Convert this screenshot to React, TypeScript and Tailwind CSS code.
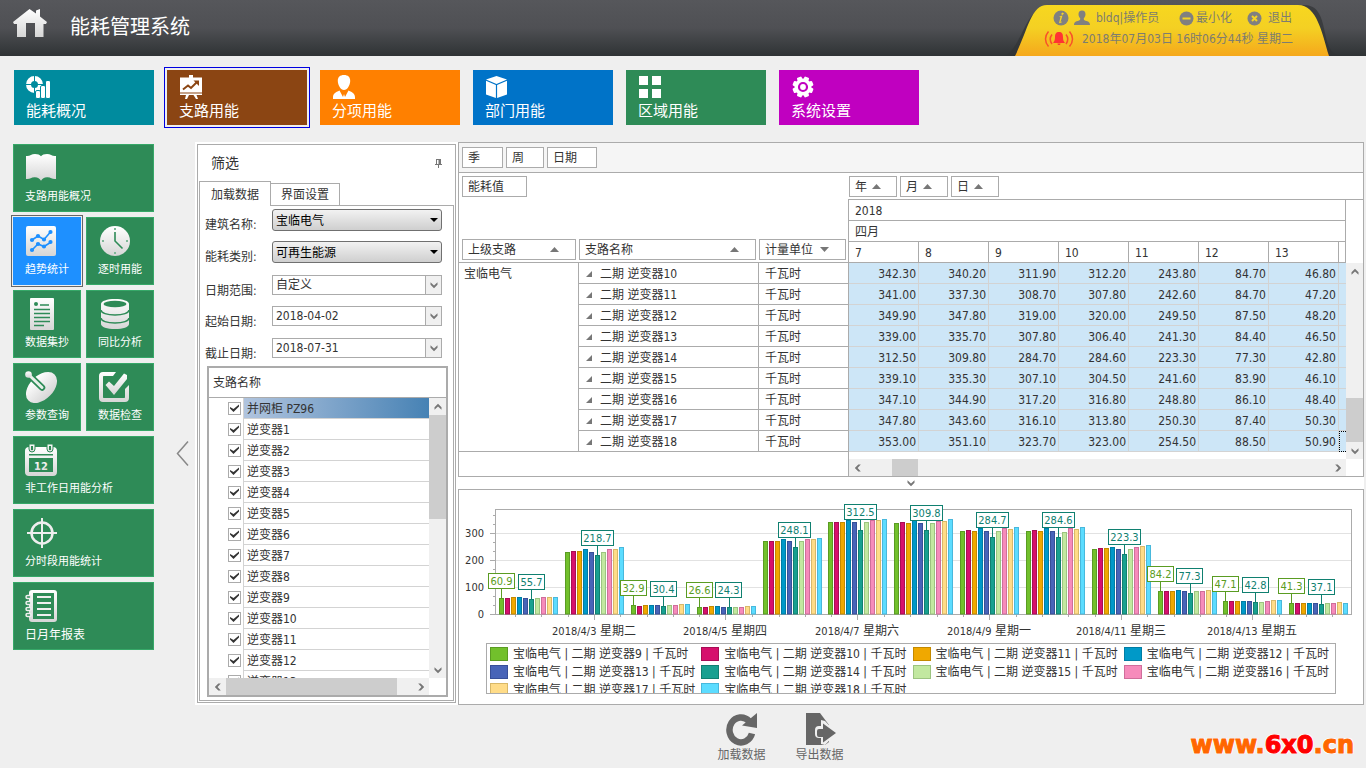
import type { ReactNode } from "react";

const SERIES = [
  { id: 9, fill: "#72c02c", line: "#5a9c22" },
  { id: 10, fill: "#d6106c", line: "#a80d55" },
  { id: 11, fill: "#f0a800", line: "#c48a00" },
  { id: 12, fill: "#0099c8", line: "#007da4" },
  { id: 13, fill: "#4864b8", line: "#384f98" },
  { id: 14, fill: "#18a090", line: "#108070" },
  { id: 15, fill: "#c2e8a0", line: "#9cc480" },
  { id: 16, fill: "#f68bbb", line: "#cf6e9b" },
  { id: 17, fill: "#ffdc88", line: "#d8b868" },
  { id: 18, fill: "#5cdcff", line: "#48b8dc" },
];

const READINGS: string[][] = [
  ["342.30", "340.20", "311.90", "312.20", "243.80", "84.70", "46.80"],
  ["341.00", "337.30", "308.70", "307.80", "242.60", "84.70", "47.20"],
  ["349.90", "347.80", "319.00", "320.00", "249.50", "87.50", "48.20"],
  ["339.00", "335.70", "307.80", "306.40", "241.30", "84.40", "46.50"],
  ["312.50", "309.80", "284.70", "284.60", "223.30", "77.30", "42.80"],
  ["339.10", "335.30", "307.10", "304.50", "241.60", "83.90", "46.10"],
  ["347.10", "344.90", "317.20", "316.80", "248.80", "86.10", "48.40"],
  ["347.80", "343.60", "316.10", "313.80", "250.30", "87.40", "50.30"],
  ["353.00", "351.10", "323.70", "323.00", "254.50", "88.50", "50.90"],
];

const FIRST_SERIES = [339.5, 336, 309, 307, 242, 84.2, 47.1];

const GROUPS: number[][] = [
  [60.9, 60, 63, 63, 60, 55.7, 60, 63, 63, 63],
  [231, 234, 234, 242, 231, 218.7, 231, 242, 242, 249],
  [32.9, 30, 34, 34, 34, 30.4, 34, 34, 37, 37],
  [26.6, 27, 30, 30, 27, 24.3, 27, 27, 30, 30],
  [271, 271, 271, 279, 271, 248.1, 271, 279, 279, 283],
  ...FIRST_SERIES.map((v, day) => [v, ...READINGS.map((r) => Number(r[day]))]),
  [41.3, 41, 41, 41, 41, 37.1, 41, 41, 44, 41],
];
const GROUP_X = [499, 565, 631, 697, 763, 828, 894, 960, 1026, 1092, 1158, 1223, 1289];

const CALLOUTS: { x: number; y: number; group: number; bar: number; text: string }[] = [
  { x: 488, y: 573, group: 0, bar: 0, text: "60.9" },
  { x: 518, y: 574, group: 0, bar: 5, text: "55.7" },
  { x: 581, y: 530, group: 1, bar: 5, text: "218.7" },
  { x: 620, y: 580, group: 2, bar: 0, text: "32.9" },
  { x: 650, y: 581, group: 2, bar: 5, text: "30.4" },
  { x: 686, y: 582, group: 3, bar: 0, text: "26.6" },
  { x: 715, y: 582, group: 3, bar: 5, text: "24.3" },
  { x: 778, y: 522, group: 4, bar: 5, text: "248.1" },
  { x: 844, y: 504, group: 5, bar: 5, text: "312.5" },
  { x: 910, y: 505, group: 6, bar: 5, text: "309.8" },
  { x: 976, y: 512, group: 7, bar: 5, text: "284.7" },
  { x: 1042, y: 512, group: 8, bar: 5, text: "284.6" },
  { x: 1108, y: 529, group: 9, bar: 5, text: "223.3" },
  { x: 1147, y: 566, group: 10, bar: 0, text: "84.2" },
  { x: 1176, y: 568, group: 10, bar: 5, text: "77.3" },
  { x: 1212, y: 576, group: 11, bar: 0, text: "47.1" },
  { x: 1242, y: 577, group: 11, bar: 5, text: "42.8" },
  { x: 1278, y: 578, group: 12, bar: 0, text: "41.3" },
  { x: 1308, y: 579, group: 12, bar: 5, text: "37.1" },
];

const X_LABELS = [
  { x: 594, date: "2018/4/3", day: "星期二" },
  { x: 725, date: "2018/4/5", day: "星期四" },
  { x: 857, date: "2018/4/7", day: "星期六" },
  { x: 989, date: "2018/4/9", day: "星期一" },
  { x: 1121, date: "2018/4/11", day: "星期三" },
  { x: 1252, date: "2018/4/13", day: "星期五" },
];

const barTop = (v: number) => Math.round(614 - v * 0.27);

function BarChart() {
  const minorX = Array.from({ length: 32 }, (_, i) => Math.round(515 + i * 26.35)).filter((_, i) => i % 5 !== 3);
  return (
    <svg className="block h-auto w-full" viewBox="459 490 904 150" role="img" aria-label="趋势统计">
      <g stroke="#e2e2e2">
        {[533.5, 560.5, 587.5].map((y) => (
          <line key={y} x1={496} x2={1351} y1={y} y2={y} />
        ))}
      </g>
      <rect x={495.5} y={509.5} width={856} height={105} fill="none" stroke="#ababab" />
      <g stroke="#ababab">
        {[533.5, 560.5, 587.5, 614.5].map((y) => (
          <line key={y} x1={490} x2={495} y1={y} y2={y} />
        ))}
        {[515.5, 524.5, 542.5, 551.5, 569.5, 578.5, 596.5, 605.5].map((y) => (
          <line key={y} x1={493} x2={495} y1={y} y2={y} />
        ))}
        {minorX.map((x) => (
          <line key={x} x1={x + 0.5} x2={x + 0.5} y1={615} y2={617} />
        ))}
        {X_LABELS.map((l) => (
          <line key={l.x} x1={l.x + 0.5} x2={l.x + 0.5} y1={615} y2={620} />
        ))}
      </g>
      {GROUPS.map((group, g) =>
        group.map((v, b) => (
          <rect
            key={`${g}-${b}`}
            x={GROUP_X[g] + b * 6 + 0.5}
            y={barTop(v) + 0.5}
            width={4}
            height={613.5 - barTop(v)}
            fill={SERIES[b].fill}
            stroke={SERIES[b].line}
          />
        )),
      )}
      {CALLOUTS.map((c) => {
        const color = SERIES[c.bar].line;
        const w = c.text.length > 4 ? 32 : 26;
        const anchor = GROUP_X[c.group] + c.bar * 6 + 2.5;
        return (
          <g key={c.text}>
            <line x1={anchor} x2={anchor} y1={c.y + 15} y2={barTop(GROUPS[c.group][c.bar])} stroke={color} />
            <rect x={c.x + 0.5} y={c.y + 0.5} width={w} height={15} fill="#fff" stroke={color} />
            <text x={c.x + w / 2 + 0.5} y={c.y + 12} textAnchor="middle" className="text-[11px]" fill={color}>
              {c.text}
            </text>
          </g>
        );
      })}
      <g fill="#333">
        {[300, 200, 100, 0].map((v) => (
          <text key={v} x={484} y={618 - v * 0.27} textAnchor="end" className="text-[11px]">
            {v}
          </text>
        ))}
        {X_LABELS.map((l) => (
          <text key={l.x} x={l.x} y={635} textAnchor="middle" className="text-[12px]">
            <tspan className="text-[11px]">{l.date}</tspan> {l.day}
          </text>
        ))}
      </g>
    </svg>
  );
}

type Direction = "up" | "down" | "left" | "right";
const TURN: Record<Direction, string> = { up: "", down: "rotate-180", left: "-rotate-90", right: "rotate-90" };

function Chevron({ dir }: { dir: Direction }) {
  return (
    <svg className={`block h-[8px] w-[8px] ${TURN[dir]}`} viewBox="0 0 8 8" aria-hidden="true">
      <path d="M0.5 6.8V4.3L4 0.8l3.5 3.5v2.5L4 3.6z" fill="#777" />
    </svg>
  );
}

function ScrollButton({ dir, label }: { dir: Direction; label: string }) {
  return (
    <button type="button" aria-label={label} className="flex h-[17px] w-[17px] shrink-0 items-center justify-center bg-[#f0f0f0]">
      <Chevron dir={dir} />
    </button>
  );
}

function FieldChip({ label, width, sort }: { label: string; width: string; sort?: "asc" | "desc" | "near" }) {
  return (
    <button
      type="button"
      className={`flex h-[21px] items-center border border-[#ababab] bg-white pl-[5px] ${sort === "near" || !sort ? "justify-start gap-[5px]" : "justify-between pr-[16px]"} ${width}`}
    >
      <span>{label}</span>
      {sort && (
        <svg className={sort === "desc" ? "h-[5px] w-[9px] rotate-180" : "h-[5px] w-[9px]"} viewBox="0 0 9 5" aria-hidden="true">
          <path d="M4.5 0L9 5H0z" fill="#777" />
        </svg>
      )}
    </button>
  );
}

const NAV: { label: string; color: string; active?: boolean; icon: ReactNode }[] = [
  {
    label: "能耗概况",
    color: "bg-[#008b9e]",
    icon: (
      <>
        <circle cx="8.5" cy="9.5" r="6" fill="none" stroke="#fff" strokeWidth="5" />
        <path d="M8.5 0.5v6M0 9.500h6M11 9.500h6M8.500 12.500v6" stroke="#008b9e" strokeWidth="1" />
        <g stroke="#008b9e" strokeWidth="1">
          <rect x="9.500" y="15.500" width="5" height="8" rx="1.500" />
          <rect x="14.500" y="10.500" width="5" height="13" rx="1.500" />
          <rect x="19.500" y="5.500" width="5" height="18" rx="1.500" />
        </g>
      </>
    ),
  },
  {
    label: "支路用能",
    color: "bg-[#8b4513]",
    active: true,
    icon: (
      <>
        <path d="M10 0h4v2.500h9V17.500H1v-15h9zM1 18.500h22V20H1zM7 20h3l-2 4H6zM14.500 20h3l1.500 4h-2z" />
        <path d="M4 14.500l5-4 3 2.500 6-6" fill="none" stroke="#8b4513" strokeWidth="2" />
        <path d="M14.500 5.500H20V11z" fill="#8b4513" />
      </>
    ),
  },
  {
    label: "分项用能",
    color: "bg-[#ff8000]",
    icon: (
      <path d="M5.800 6C5.800 2 8 0 12 0s6.200 2 6.200 6c0 2-.8 4.500-2 6.300C15 14 13.800 15 12 15s-3-1-4.200-2.700C6.600 10.500 5.800 8 5.800 6zM7.500 15.500L11 22l1-3 1 3 3.500-6.500c4 1.800 6.500 3 6.500 7V24H1v-1.500c0-4 2.500-5.200 6.500-7z" />
    ),
  },
  {
    label: "部门用能",
    color: "bg-[#0073c8]",
    icon: <path d="M11.500 1L22 4.500 11.500 9 1 4.500zM1 5.700l9.900 4.300v13L1 19.500zM22 5.700v13.800L12.100 23V10z" />,
  },
  {
    label: "区域用能",
    color: "bg-[#2e8b57]",
    icon: <path d="M1 1h9v9H1zM14 1h9v9h-9zM1 14h9v9H1zM14 14h9v9h-9z" />,
  },
  {
    label: "系统设置",
    color: "bg-[#c000c0]",
    icon: (
      <>
        <circle cx="12" cy="12" r="8.500" />
        {[22.5, 67.5, 112.5, 157.5, 202.5, 247.5, 292.5, 337.5].map((a) => (
          <rect key={a} x="9.500" y="1.500" width="5" height="4" rx="1" transform={`rotate(${a} 12 12)`} />
        ))}
        <circle cx="12" cy="12" r="4" fill="#fff" stroke="#c000c0" strokeWidth="2.200" />
      </>
    ),
  },
];

const GREEN = "#2e8b57";
const SIDE: { label: string; wide?: boolean; active?: boolean; big?: boolean; icon: ReactNode }[] = [
  {
    label: "支路用能概况",
    wide: true,
    icon: (
      <path d="M1 4c4 .6 5-2 9-2 3 0 4.500.8 6 2.300C17.500 2.800 19 2 22 2c4 0 5 2.600 9 2v23c-4 .6-5-2-9-1.700-3 0-4.500 1.200-6 3.500-1.500-2.300-3-3.500-6-3.500-4-.3-5 2.300-9 1.700z" />
    ),
  },
  {
    label: "趋势统计",
    active: true,
    icon: (
      <>
        <rect x="1" y="1" width="30" height="30" rx="2" />
        <g stroke="#1e90ff" strokeWidth="1.600" fill="#1e90ff">
          <path d="M7 15l6-4 6 3.500 6.500-7.500M7 25l6-6 6 2.500 6.500-4" fill="none" />
          {[[7, 15], [13, 11], [19, 14.5], [25.5, 7], [7, 25], [13, 19], [19, 21.5], [25.5, 17]].map(([x, y]) => (
            <circle key={`${x}-${y}`} cx={x} cy={y} r="1.300" />
          ))}
        </g>
      </>
    ),
  },
  {
    label: "逐时用能",
    icon: (
      <>
        <circle cx="17" cy="16" r="15" />
        <path d="M17 7v9l7.500 7.500" stroke={GREEN} strokeWidth="1.600" fill="none" />
        <path d="M16 3h2v2h-2zM16 27h2v2h-2zM4 15h2v2H4zM28 15h2v2h-2z" fill="#7fb898" />
      </>
    ),
  },
  {
    label: "数据集抄",
    icon: (
      <>
        <rect x="5" y="0" width="24" height="32" rx="1" />
        <circle cx="11" cy="6" r="2" fill={GREEN} />
        <path d="M15 7h9M9 11.500h16M9 15.500h16M9 19.500h16M9 23.500h16M9 27.500h10" stroke={GREEN} strokeWidth="1.500" />
      </>
    ),
  },
  {
    label: "同比分析",
    icon: (
      <>
        <path d="M3 6c0-3 6-5 14-5s14 2 14 5v20c0 3-6 5-14 5S3 29 3 26z" />
        <ellipse cx="17" cy="6" rx="11.500" ry="3.200" fill={GREEN} />
        <path d="M3 12c0 3 6 5 14 5s14-2 14-5M3 20c0 3 6 5 14 5s14-2 14-5" fill="none" stroke={GREEN} strokeWidth="1.500" />
      </>
    ),
  },
  {
    label: "参数查询",
    icon: (
      <>
        <ellipse cx="16.500" cy="16.500" rx="18.500" ry="11.800" transform="rotate(-45 16.500 16.500)" />
        <path d="M3 3l14 13.500" stroke={GREEN} strokeWidth="6.500" strokeLinecap="round" />
        <path d="M3 3l14 13.500" stroke="#e8f0ea" strokeWidth="3" strokeLinecap="round" />
        <circle cx="3.500" cy="3.500" r="3.300" />
      </>
    ),
  },
  {
    label: "数据检查",
    icon: (
      <>
        <path d="M18 1H5C2.500 1 1 2.500 1 5v22c0 2.500 1.500 4 4 4h22c2.500 0 4-1.500 4-4V14l-4 4v8c0 .7-.3 1-1 1H6c-.7 0-1-.3-1-1V6c0-.7.3-1 1-1h9z" />
        <path d="M7.500 14l3.500-3.500 5 4.500L26 2.500l3 1.500v4L16 24z" />
      </>
    ),
  },
  {
    label: "非工作日用能分析",
    wide: true,
    icon: (
      <>
        <path d="M4 3h24c2.500 0 4 1.500 4 4v21c0 2.500-1.500 4-4 4H4c-2.500 0-4-1.500-4-4V7c0-2.500 1.500-4 4-4z" />
        <path d="M4 0h6v5a3 3 0 0 1-6 0zM22 0h6v5a3 3 0 0 1-6 0z" stroke={GREEN} />
        <path d="M6 2h2v4H6zM24 2h2v4h-2zM4 10h24v1.500H4zM4 14h24v14H4z" fill={GREEN} />
        <text x="16" y="26" textAnchor="middle" fontSize="11" fontWeight="bold">12</text>
      </>
    ),
  },
  {
    label: "分时段用能统计",
    wide: true,
    icon: (
      <>
        <circle cx="17" cy="16" r="10.500" fill="none" stroke="#eee" strokeWidth="2.500" />
        <path d="M17 1v30M2 16h30" stroke="#eee" strokeWidth="2" />
      </>
    ),
  },
  {
    label: "日月年报表",
    wide: true,
    big: true,
    icon: (
      <>
        <path d="M7 0h22c2 0 3 1 3 3v26c0 2-1 3-3 3H7c-2 0-3-1-3-3V3c0-2 1-3 3-3z" />
        <path d="M8 3h21v26H8z" fill={GREEN} />
        <path d="M12 7h14M12 13h14M12 19h14M12 25h14" stroke="#f0f0f0" strokeWidth="2" />
        {[5.5, 11.5, 17.5, 23.5].map((y) => (
          <rect key={y} x="1" y={y} width="5" height="3" rx="1.500" fill={GREEN} stroke="#f0f0f0" strokeWidth="1.500" />
        ))}
      </>
    ),
  },
];

const BRANCHES = ["并网柜 PZ96", ...Array.from({ length: 13 }, (_, i) => `逆变器${i + 1}`)];

function Header() {
  return (
    <header className="flex h-[56px] justify-between bg-linear-to-b from-[#56575b] via-[#4f5054] to-[#2f3335]">
      <div className="flex pl-[12px]">
        <a href="#home" aria-label="首页" className="mt-[8px] block h-[30px] w-[36px]">
          <svg viewBox="0 0 36 30" className="h-full w-full" aria-hidden="true">
            <defs>
              <linearGradient id="metal" x1="0" y1="0" x2="0" y2="1">
                <stop offset="0" stopColor="#fff" />
                <stop offset="1" stopColor="#d6d6d6" />
              </linearGradient>
            </defs>
            <path d="M17.500 1L24 5.500V2.500l4-1.500v7.500l7 5.500-1 2h-2.500v13H23V15h-9v14H5V16H2l-1-2z" fill="url(#metal)" />
          </svg>
        </a>
        <h1 className="ml-[22px] mt-[12px] text-[20px] leading-[30px] text-white">能耗管理系统</h1>
      </div>
      <div className="relative mr-[26px] w-[336px] text-[12px] leading-[18px] text-[#7d7d70]">
        <svg className="absolute inset-0 h-[56px] w-[336px]" viewBox="0 0 336 56" aria-hidden="true">
          <defs>
            <linearGradient id="gold" x1="0" y1="0" x2="0" y2="1">
              <stop offset="0" stopColor="#f7d71f" />
              <stop offset="0.45" stopColor="#f4d023" />
              <stop offset="1" stopColor="#f5a81c" />
            </linearGradient>
          </defs>
          <path d="M2 56C22 40 20 5 50 5h250C328 5 314 52 336 56z" fill="#303335" opacity="0.700" />
          <path d="M11 56C24 30 27 5 43 5h251c19 0 24 28 31 51z" fill="url(#gold)" />
        </svg>
        <div className="relative ml-[49px] mt-[9px] flex items-center">
          <svg className="h-[16px] w-[16px]" viewBox="0 0 16 16" aria-hidden="true">
            <circle cx="8" cy="8" r="7.500" fill="#808080" />
            <path d="M9.500 2.500l1.500 1-1.500 1.500L8 4zM6 6.500l3.500-1L7.500 12l1.500-.5-.5 1-2.500.8L7.500 7z" fill="#f4d424" />
          </svg>
          <svg className="ml-[5px] h-[16px] w-[16px]" viewBox="0 0 16 16" aria-hidden="true">
            <path d="M8 0.500c2.500 0 3.500 1.500 3.500 3.800 0 1.700-.8 3.200-1.700 4 0 1.500.2 2 1.700 2.500 2.500.7 4.500 1.200 4.500 4.200H0c0-3 2-3.500 4.500-4.200C6 10.300 6.200 9.800 6.200 8.300c-.9-.8-1.700-2.300-1.700-4C4.500 2 5.500 0.500 8 0.500z" fill="#808080" />
          </svg>
          <span className="ml-[6px] w-[83px]">bldq|操作员</span>
          <button type="button" className="flex w-[68px] items-center gap-[2px]">
            <svg className="h-[15px] w-[15px]" viewBox="0 0 15 15" aria-hidden="true">
              <circle cx="7.500" cy="7.500" r="7" fill="#808080" />
              <path d="M3.500 6.500h8v2h-8z" fill="#f4d424" />
            </svg>
            最小化
          </button>
          <button type="button" className="flex items-center gap-[6px]">
            <svg className="h-[15px] w-[15px]" viewBox="0 0 15 15" aria-hidden="true">
              <circle cx="7.500" cy="7.500" r="7" fill="#808080" />
              <path d="M5 5l5 5M10 5l-5 5" stroke="#f4d424" strokeWidth="2" />
            </svg>
            退出
          </button>
        </div>
        <div className="relative ml-[40px] mt-[3px] flex items-center gap-[8px]">
          <svg className="h-[18px] w-[30px]" viewBox="0 0 30 18" aria-hidden="true">
            <path d="M15 2c3 0 4 2 4 5 0 3 .5 4 2 6H9c1.500-2 2-3 2-6 0-3 1-5 4-5zM13.500 13.500h3c0 2-3 2-3 0z" fill="#f33" />
            <path d="M8 4.500c-2.300 3-2.300 6.500 0 9.500M4.500 1.500c-4 4.500-4 10.500 0 15M22 4.500c2.300 3 2.300 6.500 0 9.500M25.500 1.500c4 4.500 4 10.500 0 15" fill="none" stroke="#f8502a" strokeWidth="1.500" />
          </svg>
          <time>2018年07月03日 16时06分44秒 星期二</time>
        </div>
      </div>
    </header>
  );
}

function FilterPanel() {
  const labelClass = "w-[67px] shrink-0 pl-[5px] pt-[7px]";
  const classic =
    "h-[22px] w-full appearance-none rounded-[3px] border border-[#707070] bg-linear-to-b from-[#f2f2f2] to-[#cfcfcf] pl-[3px] pt-[1px] text-black";
  const flat = "h-[20px] w-full appearance-none border border-[#ababab] bg-white pl-[3px] text-[#333]";
  const arrowBox = "pointer-events-none absolute right-0 top-0 flex h-[20px] w-[17px] items-center justify-center border border-[#ababab] bg-[#f0f0f0]";
  return (
    <section className="flex w-[259px] shrink-0 flex-col border border-[#ababab] p-px">
      <div className="flex h-[34px] items-center justify-between pl-[12px] pr-[12px]">
        <h2 className="text-[14px]">筛选</h2>
        <button type="button" aria-label="固定">
          <svg className="h-[9px] w-[7px]" viewBox="0 0 7 9" aria-hidden="true">
            <path d="M1 0h5v5h1v1H4v3H3V6H0V5h1zM2 1v4h1.500V1z" fill="#777" fillRule="evenodd" />
          </svg>
        </button>
      </div>
      <div role="tablist" className="mt-px flex items-end">
        <button type="button" role="tab" aria-selected="true" className="h-[25px] w-[72px] border border-b-0 border-[#ababab] pt-[1px] text-center">
          加载数据
        </button>
        <button type="button" role="tab" aria-selected="false" className="h-[23px] w-[69px] border border-l-0 border-[#ababab] pt-[1px] text-center">
          界面设置
        </button>
        <div className="h-px flex-1 bg-[#ababab]" />
      </div>
      <div className="flex flex-1 flex-col border border-t-0 border-[#ababab]">
        <div className="flex flex-col pr-[11px] pt-[3px]">
          <div className="flex h-[32px]">
            <label htmlFor="building" className={labelClass}>建筑名称:</label>
            <div className="relative ml-[5px] flex-1">
              <select id="building" className={classic}>
                <option>宝临电气</option>
              </select>
              <svg className="pointer-events-none absolute right-[4px] top-[9px] h-[4px] w-[8px]" viewBox="0 0 8 4" aria-hidden="true">
                <path d="M0 0h8L4 4z" />
              </svg>
            </div>
          </div>
          <div className="flex h-[34px]">
            <label htmlFor="category" className={labelClass}>能耗类别:</label>
            <div className="relative ml-[5px] flex-1">
              <select id="category" className={classic}>
                <option>可再生能源</option>
              </select>
              <svg className="pointer-events-none absolute right-[4px] top-[9px] h-[4px] w-[8px]" viewBox="0 0 8 4" aria-hidden="true">
                <path d="M0 0h8L4 4z" />
              </svg>
            </div>
          </div>
          <div className="flex h-[31px]">
            <label htmlFor="range" className={labelClass}>日期范围:</label>
            <div className="relative ml-[5px] flex-1">
              <select id="range" className={flat}>
                <option>自定义</option>
              </select>
              <span className={arrowBox}><Chevron dir="down" /></span>
            </div>
          </div>
          <div className="flex h-[32px]">
            <label htmlFor="from" className={labelClass}>起始日期:</label>
            <div className="relative ml-[5px] flex-1">
              <input id="from" defaultValue="2018-04-02" className={flat} />
              <span className={arrowBox}><Chevron dir="down" /></span>
            </div>
          </div>
          <div className="flex h-[28px]">
            <label htmlFor="to" className={labelClass}>截止日期:</label>
            <div className="relative ml-[5px] flex-1">
              <input id="to" defaultValue="2018-07-31" className={flat} />
              <span className={arrowBox}><Chevron dir="down" /></span>
            </div>
          </div>
        </div>
        <div className="mb-[3px] ml-[7px] mr-[5px] flex-1 border-2 border-[#ababab]">
          <div className="flex h-[30px] items-center border-b border-[#ababab] pl-[4px]">支路名称</div>
          <div className="flex h-[280px]">
            <ul className="flex-1 overflow-hidden">
              {BRANCHES.map((name, i) => (
                <li key={name} className="h-[21px]">
                  <label className="flex h-full items-center">
                    <input type="checkbox" defaultChecked className="peer sr-only" />
                    <span className="ml-[19px] mr-[2px] flex h-[13px] w-[13px] items-center justify-center border border-[#ababab] bg-white peer-focus-visible:outline">
                      <svg className="h-[9px] w-[9px]" viewBox="0 0 9 9" aria-hidden="true">
                        <path d="M0 4.500l3.500 3.500L9 2.500V0.500L3.500 5 0 3z" fill="#333" />
                      </svg>
                    </span>
                    <span
                      className={`flex h-full flex-1 items-center border-b border-l border-[#d3d3d3] pl-[3px] pt-[2px] ${i === 0 ? "bg-linear-to-r from-[#b0c4de] to-[#4682b4]" : ""}`}
                    >
                      {name}
                    </span>
                  </label>
                </li>
              ))}
            </ul>
            <div className="flex w-[17px] flex-col justify-between bg-[#f0f0f0]">
              <div>
                <ScrollButton dir="up" label="向上" />
                <div className="h-[104px] bg-[#cdcdcd]" />
              </div>
              <ScrollButton dir="down" label="向下" />
            </div>
          </div>
          <div className="mr-[17px] flex bg-[#f0f0f0]">
            <ScrollButton dir="left" label="向左" />
            <div className="w-[171px] bg-[#cdcdcd]" />
            <div className="flex-1" />
            <ScrollButton dir="right" label="向右" />
          </div>
        </div>
      </div>
    </section>
  );
}

function PivotGrid() {
  const head = "h-[21px] border-b border-r border-[#ababab] p-0 pl-[6px] pt-[2px] text-left font-normal";
  const rowHead = "h-[21px] border-b border-r border-[#ababab] p-0 pt-[2px] text-left font-normal";
  return (
    <section className="border border-[#ababab] bg-white">
      <div className="flex h-[30px] items-center gap-[3px] border-b border-[#ababab] bg-[#f5f5f5] pl-[3px]">
        <FieldChip label="季" width="w-[41px]" />
        <FieldChip label="周" width="w-[38px]" />
        <FieldChip label="日期" width="w-[50px]" />
      </div>
      <div className="flex">
        <div className="w-[389px] shrink-0">
          <div className="flex h-[89px] flex-col justify-between pb-[2px] pl-[3px] pt-[3px]">
            <FieldChip label="能耗值" width="w-[65px]" />
            <div className="flex gap-[3px]">
              <FieldChip label="上级支路" width="w-[114px]" sort="asc" />
              <FieldChip label="支路名称" width="w-[177px]" sort="asc" />
              <FieldChip label="计量单位" width="w-[87px]" sort="desc" />
            </div>
          </div>
          <table className="w-full table-fixed border-separate border-spacing-0 border-t border-[#ababab]">
            <colgroup>
              <col className="w-[120px]" />
              <col className="w-[180px]" />
              <col />
            </colgroup>
            <tbody>
              {READINGS.map((_, i) => (
                <tr key={i}>
                  {i === 0 && (
                    <th rowSpan={9} scope="rowgroup" className="border-b border-r border-[#ababab] p-0 pl-[5px] pt-[2px] text-left align-top font-normal">
                      宝临电气
                    </th>
                  )}
                  <th scope="row" className={rowHead}>
                    <span className="flex items-center gap-[8px] pl-[7px]">
                      <svg className="h-[6px] w-[6px]" viewBox="0 0 6 6" aria-hidden="true">
                        <path d="M6 0v6H0z" fill="#777" />
                      </svg>
                      二期 逆变器{i + 10}
                    </span>
                  </th>
                  <td className="h-[21px] border-b border-[#ababab] p-0 pl-[6px] pt-[2px]">千瓦时</td>
                </tr>
              ))}
            </tbody>
          </table>
        </div>
        <div className="flex min-w-0 flex-1 flex-col">
          <div className="flex h-[26px] gap-[3px] pl-px pt-[3px]">
            <FieldChip label="年" width="w-[48px]" sort="near" />
            <FieldChip label="月" width="w-[48px]" sort="near" />
            <FieldChip label="日" width="w-[48px]" sort="near" />
          </div>
          <div className="flex flex-1 border-l border-t border-[#ababab]">
            <div className="flex min-w-0 flex-1 flex-col justify-between gap-[7px]">
              <table className="w-full table-fixed border-separate border-spacing-0">
                <colgroup>
                  {READINGS[0].map((_, i) => (
                    <col key={i} className="w-[70px]" />
                  ))}
                  <col />
                </colgroup>
                <thead>
                  <tr>
                    <th colSpan={8} className={head}>2018</th>
                  </tr>
                  <tr>
                    <th colSpan={8} className={head}>四月</th>
                  </tr>
                  <tr>
                    {["7", "8", "9", "10", "11", "12", "13", ""].map((d) => (
                      <th key={d} className={head}>{d}</th>
                    ))}
                  </tr>
                </thead>
                <tbody>
                  {READINGS.map((row, i) => (
                    <tr key={i} className="bg-[#cde6f7]">
                      {row.map((v, j) => (
                        <td key={j} className="h-[21px] border-b border-r border-[#d3d3d3] p-0 pr-[2px] pt-[2px] text-right">{v}</td>
                      ))}
                      <td className={i === 8 ? "border border-r-0 border-dotted border-black p-0" : "border-b border-[#d3d3d3] p-0"} />
                    </tr>
                  ))}
                </tbody>
              </table>
              <div className="flex bg-[#f0f0f0]">
                <ScrollButton dir="left" label="向左" />
                <div className="ml-[26px] w-[26px] bg-[#cdcdcd]" />
                <div className="flex-1" />
                <ScrollButton dir="right" label="向右" />
              </div>
            </div>
            <div className="mb-[17px] mt-[63px] flex w-[17px] flex-col justify-between bg-[#f0f0f0]">
              <ScrollButton dir="up" label="向上" />
              <div>
                <div className="h-[44px] bg-[#cdcdcd]" />
                <ScrollButton dir="down" label="向下" />
              </div>
            </div>
          </div>
        </div>
      </div>
    </section>
  );
}

export default function App() {
  return (
    <div className="flex min-h-screen flex-col bg-[#efefef] font-['DejaVu_Sans_Condensed','Noto_Sans_CJK_SC',sans-serif] text-[12px] leading-[18px] text-[#333]">
      <Header />
      <nav className="flex gap-[13px] px-[14px] pb-[17px] pt-[14px]">
        {NAV.map((n) => (
          <a
            key={n.label}
            href={`#${n.label}`}
            className={`h-[55px] w-[140px] pl-[12px] pt-[5px] text-white ${n.color} ${n.active ? "outline outline-offset-2 outline-[#0000e0]" : ""}`}
          >
            <svg className="block h-[24px] w-[24px]" viewBox="0 0 24 24" fill="#fff" aria-hidden="true">
              {n.icon}
            </svg>
            <span className="mt-[2px] block text-[15px] leading-[20px]">{n.label}</span>
          </a>
        ))}
      </nav>
      <main className="flex">
        <aside className="grid w-[154px] shrink-0 grid-cols-2 content-start gap-[5px] pl-[13px] pt-[2px]">
          {SIDE.map((s) => (
            <a
              key={s.label}
              href={`#${s.label}`}
              className={`h-[68px] border pl-[11px] pt-[7px] text-white ${s.wide ? "col-span-2" : ""} ${
                s.active ? "border-[#1e90ff] bg-[#1e90ff] outline outline-offset-1 outline-[#666]" : "border-[#36a868] bg-[#2e8b57]"
              }`}
            >
              <svg className="block h-[32px] w-[33px]" viewBox="0 0 33 32" fill="url(#metal)" aria-hidden="true">
                {s.icon}
              </svg>
              <span className={`mt-[4px] block leading-[18px] ${s.big ? "text-[12px]" : "text-[11px]"}`}>{s.label}</span>
            </a>
          ))}
        </aside>
        <button type="button" aria-label="收起" className="ml-[22px] mr-[6px] mt-[299px] h-[25px] w-[13px] shrink-0">
          <svg className="h-full w-full" viewBox="0 0 13 25" aria-hidden="true">
            <path d="M12 0.500L1.500 12.500 12 24.500" fill="none" stroke="#888" strokeWidth="1.500" />
          </svg>
        </button>
        <div className="mr-[2px] flex min-w-0 flex-1 bg-white pl-[2px]">
          <div className="flex py-[2px]">
            <FilterPanel />
          </div>
          <div className="ml-[2px] flex min-w-0 flex-1 flex-col">
            <PivotGrid />
            <button type="button" aria-label="折叠" className="flex h-[12px] w-full items-center justify-center">
              <Chevron dir="down" />
            </button>
            <section className="border border-[#ababab] pb-[10px]">
              <BarChart />
              <div className="ml-[27px] mr-[27px] mt-[3px] h-[51px] overflow-hidden border border-[#ababab] pl-[3px]">
                <ul className="grid grid-cols-4">
                  {SERIES.map((s) => (
                    <li key={s.id} className="flex h-[18px] items-center gap-[5px] whitespace-nowrap pt-[2px]">
                      <svg className="h-[14px] w-[18px] shrink-0" viewBox="0 0 18 14" aria-hidden="true">
                        <rect x="0.500" y="0.500" width="17" height="13" fill={s.fill} stroke={s.line} />
                      </svg>
                      宝临电气 | 二期 逆变器{s.id} | 千瓦时
                    </li>
                  ))}
                </ul>
              </div>
            </section>
          </div>
        </div>
      </main>
      <footer className="flex flex-1 items-start pl-[195px]">
        <div className="flex-1 pl-[12px]" />
        <div className="flex gap-[30px] pt-[7px] text-[#666]">
          <button type="button" className="flex flex-col items-center">
            <svg className="h-[34px] w-[34px]" viewBox="0 0 34 34" aria-hidden="true">
              <path d="M28 21.500A11.500 12.500 0 1 1 25 9" fill="none" stroke="#666" strokeWidth="6.500" />
              <path d="M33 1v15L18 13.500z" fill="#666" />
            </svg>
            加载数据
          </button>
          <button type="button" className="flex flex-col items-center">
            <svg className="h-[34px] w-[34px]" viewBox="0 0 34 34" aria-hidden="true">
              <path d="M3 1h14l9 12v17l-4 3H3z" fill="#666" />
              <path d="M18 8l4 1 11.500 12L22 33l-4-1v-6h-2q-4 0-4-4v-4q0-4 4-4h2z" fill="#efefef" />
              <path d="M20 11.500L33 21 20 30.500V25h-4q-2 0-2-2v-4q0-2 2-2h4z" fill="#666" />
            </svg>
            导出数据
          </button>
        </div>
        <div className="flex flex-1 justify-end pr-[12px] pt-[24px]">
          <a
            href="#www.6x0.cn"
            className="font-['DejaVu_Sans',sans-serif] text-[24px] font-bold leading-[32px] text-[#ff6600] [-webkit-text-stroke:1px_currentColor] [text-shadow:1px_1px_0_#fff,-1px_-1px_0_#fff,1px_-1px_0_#fff,-1px_1px_0_#fff]"
          >
            www.<span className="text-[#ff0000]">6x0</span>.cn
          </a>
        </div>
      </footer>
    </div>
  );
}
